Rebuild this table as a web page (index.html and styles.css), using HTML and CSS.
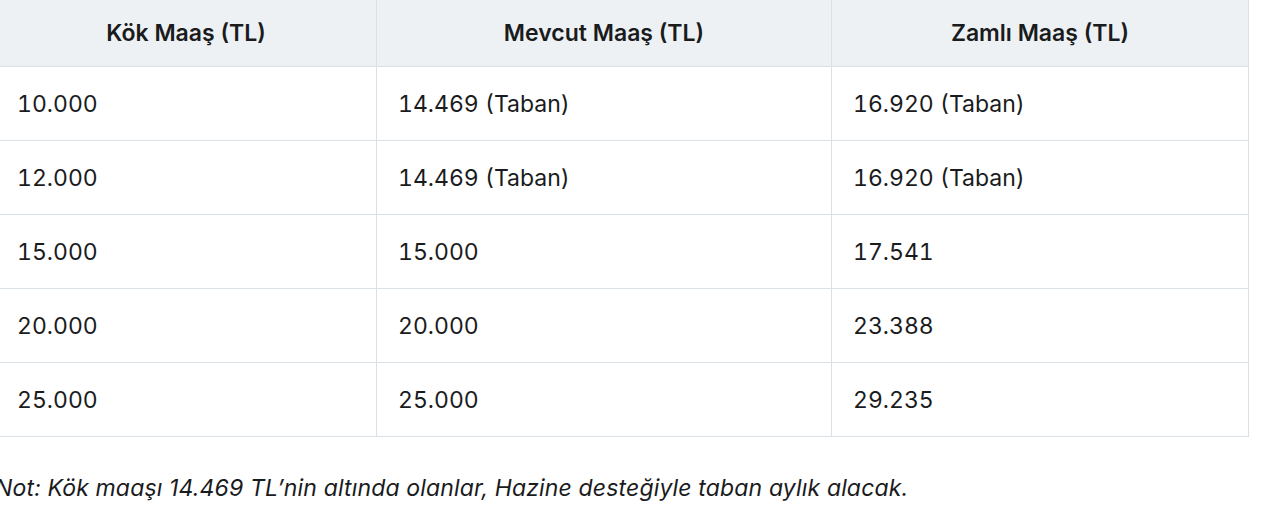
FILE: index.html
```html
<!DOCTYPE html>
<html lang="tr">
<head>
<meta charset="utf-8">
<link rel="stylesheet" href="styles.css">
</head>
<body>
<div class="wrap">
  <table class="salary">
    <colgroup>
      <col class="c1">
      <col class="c2">
      <col class="c3">
    </colgroup>
    <thead>
      <tr>
        <th>Kök Maaş (TL)</th>
        <th>Mevcut Maaş (TL)</th>
        <th>Zamlı Maaş (TL)</th>
      </tr>
    </thead>
    <tbody>
      <tr><td>10.000</td><td>14.469 (Taban)</td><td>16.920 (Taban)</td></tr>
      <tr><td>12.000</td><td>14.469 (Taban)</td><td>16.920 (Taban)</td></tr>
      <tr><td>15.000</td><td>15.000</td><td>17.541</td></tr>
      <tr><td>20.000</td><td>20.000</td><td>23.388</td></tr>
      <tr><td>25.000</td><td>25.000</td><td>29.235</td></tr>
    </tbody>
  </table>
  <p class="note">Not: Kök maaşı 14.469 TL’nin altında olanlar, Hazine desteğiyle taban aylık alacak.</p>
</div>
</body>
</html>
```

FILE: styles.css
```css
html, body {
  margin: 0;
  padding: 0;
  background: #ffffff;
}
body {
  font-family: Inter, "Liberation Sans", sans-serif;
  color: #1a1b1d;
  overflow: hidden;
}
.wrap {
  margin-left: -5px;
  width: 1253px;
}
.salary {
  width: 1253px;
  border-collapse: collapse;
  table-layout: fixed;
  font-size: 23px;
}
.salary th, .salary td {
  border: 1px solid #d9e0e6;
  text-align: left;
  padding: 0 21px;
  line-height: 28px;
  white-space: nowrap;
}
.salary th {
  background: #eef1f3;
  font-weight: 600;
  text-align: center;
  height: 66px;
  border-top: none;
}
.salary td {
  height: 73px;
  font-variant-numeric: tabular-nums;
}
.c1 { width: 381px; }
.c2 { width: 455px; }
.c3 { width: 417px; }
.note {
  margin: 37px 0 0 0;
  font-size: 23px;
  font-style: italic;
  line-height: 28px;
  letter-spacing: 0.15px;
  color: #1a1b1d;
  white-space: nowrap;
}
```
